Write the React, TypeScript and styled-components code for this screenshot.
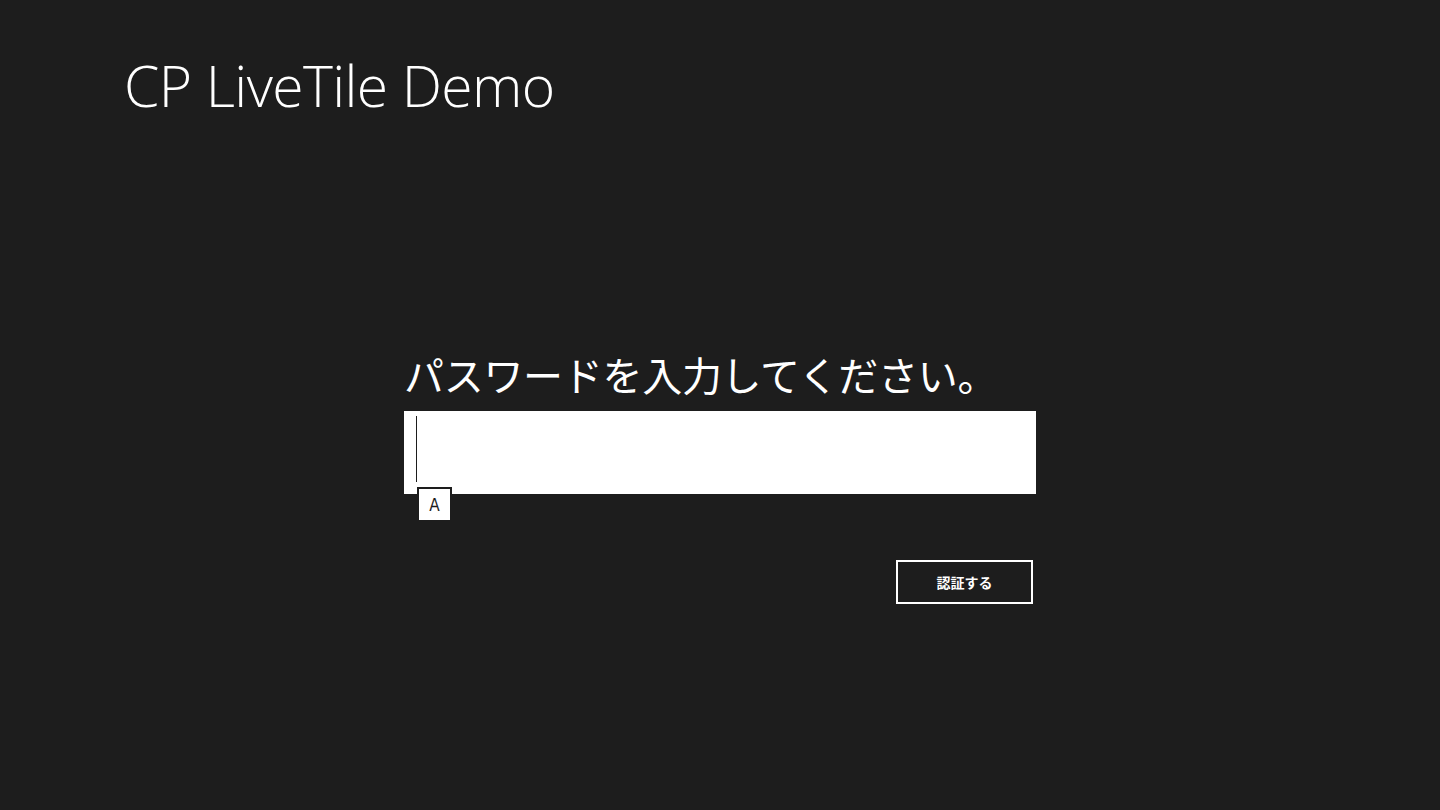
import styled, { createGlobalStyle } from 'styled-components';

const GlobalStyle = createGlobalStyle`
  html, body {
    margin: 0;
    padding: 0;
    background: #1d1d1d;
  }
  body {
    font-family: "Open Sans", "Noto Sans CJK JP", sans-serif;
    color: #ffffff;
  }
`;

export default function App() {
  return (
    <>
      <GlobalStyle />
      <Page>
        <Header>
          <Title>CP LiveTile Demo</Title>
        </Header>
        <Center>
          <Form>
            <Prompt>パスワードを入力してください。</Prompt>
            <InputWrap>
              <PasswordBox>
                <Caret />
              </PasswordBox>
              <ImeBadge>A</ImeBadge>
            </InputWrap>
            <Actions>
              <SubmitButton type="button">認証する</SubmitButton>
            </Actions>
          </Form>
        </Center>
      </Page>
    </>
  );
}

const Page = styled.div`
  width: 1440px;
  height: 810px;
  display: flex;
  flex-direction: column;
  background: #1d1d1d;
  overflow: hidden;
`;

const Header = styled.header`
  padding: 49px 0 0 124px;
  height: 75px;
`;

const Title = styled.h1`
  margin: 0;
  font-family: "Open Sans", sans-serif;
  font-weight: 300;
  font-size: 57px;
  line-height: 72px;
  letter-spacing: -0.6px;
  color: #ffffff;
`;

const Center = styled.main`
  display: flex;
  justify-content: center;
  padding-top: 224px;
`;

const Form = styled.div`
  width: 632px;
  display: flex;
  flex-direction: column;
`;

const Prompt = styled.p`
  margin: 0 0 11px;
  font-family: "Noto Sans CJK JP", sans-serif;
  font-size: 40px;
  line-height: 52px;
  letter-spacing: -0.3px;
  color: #ffffff;
  white-space: nowrap;
`;

const InputWrap = styled.div`
  position: relative;
`;

const PasswordBox = styled.div`
  height: 83px;
  background: #ffffff;
  padding: 5px 0 0 12px;
  box-sizing: border-box;
`;

const Caret = styled.div`
  width: 1px;
  height: 66px;
  background: #1d1d1d;
`;

const ImeBadge = styled.div`
  position: absolute;
  left: 13px;
  top: 76px;
  width: 35px;
  height: 35px;
  box-sizing: border-box;
  border: 2px solid #1d1d1d;
  background: #ffffff;
  color: #1d1d1d;
  font-family: "DejaVu Sans Condensed", "Liberation Sans", sans-serif;
  font-size: 17px;
  display: flex;
  align-items: center;
  justify-content: center;
`;

const Actions = styled.div`
  display: flex;
  justify-content: flex-end;
  padding: 66px 3px 0 0;
`;

const SubmitButton = styled.button`
  width: 137px;
  height: 44px;
  background: transparent;
  border: 2px solid #ffffff;
  color: #ffffff;
  font-family: "Noto Sans CJK JP", sans-serif;
  font-weight: 700;
  font-size: 14px;
  cursor: pointer;
`;
